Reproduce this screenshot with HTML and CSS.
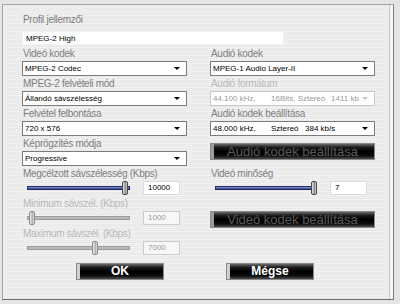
FILE: index.html
```html
<!DOCTYPE html>
<html lang="hu">
<head>
    <meta charset="UTF-8">
    <meta name="viewport" content="width=device-width, initial-scale=1.0">
    <title>Profil beállítások</title>
    <link rel="stylesheet" href="styles.css">
</head>
<body>
    <div class="dialog">
        <!-- Profil neve -->
        <div class="profile">
            <div class="label">Profil jellemzői</div>
            <div class="textbox">MPEG-2 High</div>
        </div>

        <div class="columns">
            <!-- Videó beállítások -->
            <div class="column">
                <div class="field">
                    <div class="label">Videó kodek</div>
                    <div class="select"><span>MPEG-2 Codec</span><i class="arrow"></i></div>
                </div>
                <div class="field">
                    <div class="label">MPEG-2 felvételi mód</div>
                    <div class="select"><span>Állandó sávszélesség</span><i class="arrow"></i></div>
                </div>
                <div class="field">
                    <div class="label">Felvétel felbontása</div>
                    <div class="select"><span>720 x 576</span><i class="arrow"></i></div>
                </div>
                <div class="field">
                    <div class="label">Képrögzítés módja</div>
                    <div class="select"><span>Progressive</span><i class="arrow"></i></div>
                </div>
                <div class="slider-field">
                    <div class="label">Megcélzott sávszélesség (Kbps)</div>
                    <div class="slider-row">
                        <div class="track active"><div class="thumb" style="left: 94px"></div></div>
                        <div class="value">10000</div>
                    </div>
                </div>
                <div class="slider-field disabled">
                    <div class="label">Minimum sávszél. (Kbps)</div>
                    <div class="slider-row">
                        <div class="track"><div class="thumb" style="left: 1px"></div></div>
                        <div class="value">1000</div>
                    </div>
                </div>
                <div class="slider-field disabled">
                    <div class="label">Maximum sávszél. (Kbps)</div>
                    <div class="slider-row">
                        <div class="track"><div class="thumb" style="left: 64px"></div></div>
                        <div class="value">7000</div>
                    </div>
                </div>
            </div>

            <!-- Audió beállítások -->
            <div class="column">
                <div class="field">
                    <div class="label">Audió kodek</div>
                    <div class="select"><span>MPEG-1 Audio Layer-II</span><i class="arrow"></i></div>
                </div>
                <div class="field disabled">
                    <div class="label">Audió formátum</div>
                    <div class="select"><span><span class="col-a">44.100 kHz,</span><span class="col-b">16Bits, Sztereó</span>1411 kb</span><i class="arrow"></i></div>
                </div>
                <div class="field">
                    <div class="label">Audió kodek beállítása</div>
                    <div class="select"><span><span class="col-a">48.000 kHz,</span><span class="col-c">Sztereó</span>384 kb/s</span><i class="arrow"></i></div>
                </div>
                <button class="dark-btn wide first">Audió kodek beállítása</button>
                <div class="slider-field right">
                    <div class="label">Videó minőség</div>
                    <div class="slider-row">
                        <div class="track active"><div class="thumb" style="left: 95px"></div></div>
                        <div class="value">7</div>
                    </div>
                </div>
                <button class="dark-btn wide second">Videó kodek beállítása</button>
            </div>
        </div>

        <div class="actions">
            <button class="dark-btn main">OK</button>
            <button class="dark-btn main">Mégse</button>
        </div>
    </div>
</body>
</html>
```

FILE: styles.css
```css
body {
    margin: 0;
    padding: 0;
    background-color: #e4e4e4;
    font-family: "Liberation Sans", Arial, sans-serif;
}
.dialog {
    box-sizing: border-box;
    width: 392px;
    height: 296px;
    margin: 4px 0 0 2px;
    padding: 8px 0 0 19px;
    border: 1px solid #a4a4a4;
    border-right-color: #7c7c7c;
    border-bottom-color: #6e6e6e;
    box-shadow: inset -3px 0 0 #f6f6f6, inset -4px 0 0 #c4c4c4;
    /* fondo cepillado */
    background: repeating-linear-gradient(180deg, #efefef 0 1px, #e8e8e8 1px 2px, #f2f2f2 2px 3px, #eaeaea 3px 4px);
}
.label {
    height: 14px;
    line-height: 14px;
    padding-left: 1px;
    font-size: 10px;
    letter-spacing: -0.3px;
    color: #7e7e7e;
    white-space: nowrap;
}
.disabled .label {
    color: #b9b9b9;
}
.textbox {
    box-sizing: border-box;
    width: 262px;
    height: 14px;
    margin-top: 4px;
    padding-left: 3px;
    line-height: 13px;
    font-size: 8px;
    color: #000;
    background-color: #fff;
    border: 1px solid #f2f2f2;
}
.columns {
    display: flex;
    gap: 23px;
    margin-top: 2px;
}
.column {
    display: flex;
    flex-direction: column;
    width: 165px;
}
.field {
    height: 30px;
}
.select {
    box-sizing: border-box;
    display: flex;
    justify-content: space-between;
    align-items: center;
    height: 15px;
    padding-left: 2px;
    font-size: 8px;
    color: #000;
    white-space: nowrap;
    background-color: #fff;
    border: 1px solid #7b7b7b;
}
.arrow {
    width: 0;
    height: 0;
    margin-right: 6px;
    border-left: 3px solid transparent;
    border-right: 3px solid transparent;
    border-top: 3px solid #000;
}
.disabled .select {
    color: #9a9a9a;
    border-color: #c9c9c9;
}
.disabled .arrow {
    border-top-color: #c4c4c4;
}
.col-a {
    display: inline-block;
    width: 58px;
}
.col-b {
    display: inline-block;
    width: 60px;
}
.col-c {
    display: inline-block;
    width: 34px;
}
.slider-field {
    height: 30px;
}
.slider-row {
    display: flex;
    align-items: center;
    height: 14px;
    padding-left: 5px;
}
.track {
    position: relative;
    box-sizing: border-box;
    width: 103px;
    height: 4px;
    background: linear-gradient(#d6d6d6, #a0a0a0 50%, #cfcfcf);
    border: 1px solid #9c9c9c;
}
.track.active {
    background: linear-gradient(#a8b4ee, #5262b4 50%, #2c3680);
    border-color: #232a5c;
}
.slider-field.right .track {
    width: 102px;
}
.thumb {
    position: absolute;
    top: -6px;
    box-sizing: border-box;
    width: 6px;
    height: 14px;
    border: 1px solid #4a4a4a;
    border-radius: 2px;
    background: linear-gradient(90deg, #e8e8e8, #8c8c8c 60%, #d0d0d0);
}
.disabled .thumb {
    border-color: #8e8e8e;
    background: linear-gradient(90deg, #eeeeee, #b0b0b0 60%, #dddddd);
}
.value {
    box-sizing: border-box;
    width: 37px;
    height: 14px;
    margin-left: 13px;
    padding-left: 4px;
    line-height: 12px;
    font-size: 8px;
    color: #000;
    background-color: #fff;
    border: 1px solid #dcdcdc;
}
.disabled .value {
    color: #9a9a9a;
    background-color: #f7f7f7;
    border-color: #cccccc;
}
.dark-btn {
    box-sizing: border-box;
    height: 17px;
    padding: 0;
    font-family: "Liberation Sans", Arial, sans-serif;
    line-height: 15px;
    color: #5a5a5a;
    border: 1px solid #8a8a8a;
    background: linear-gradient(#6a6a6a, #1c1c1c 22%, #000 50%, #0c0c0c 78%, #4a4a4a);
    box-shadow: inset 3px 0 0 #9c9c9c;
    cursor: pointer;
}
.dark-btn.wide {
    width: 165px;
    font-size: 13px;
}
.dark-btn.first {
    margin-top: 6px;
}
.dark-btn.second {
    margin-top: 14px;
}
.slider-field.right {
    margin-top: 7px;
}
.actions {
    display: flex;
    gap: 62px;
    margin-top: 6px;
    padding-left: 54px;
}
.dark-btn.main {
    width: 88px;
    font-size: 12px;
    font-weight: bold;
    color: #fff;
    box-shadow: inset 3px 0 0 #cfcfcf;
}
```
